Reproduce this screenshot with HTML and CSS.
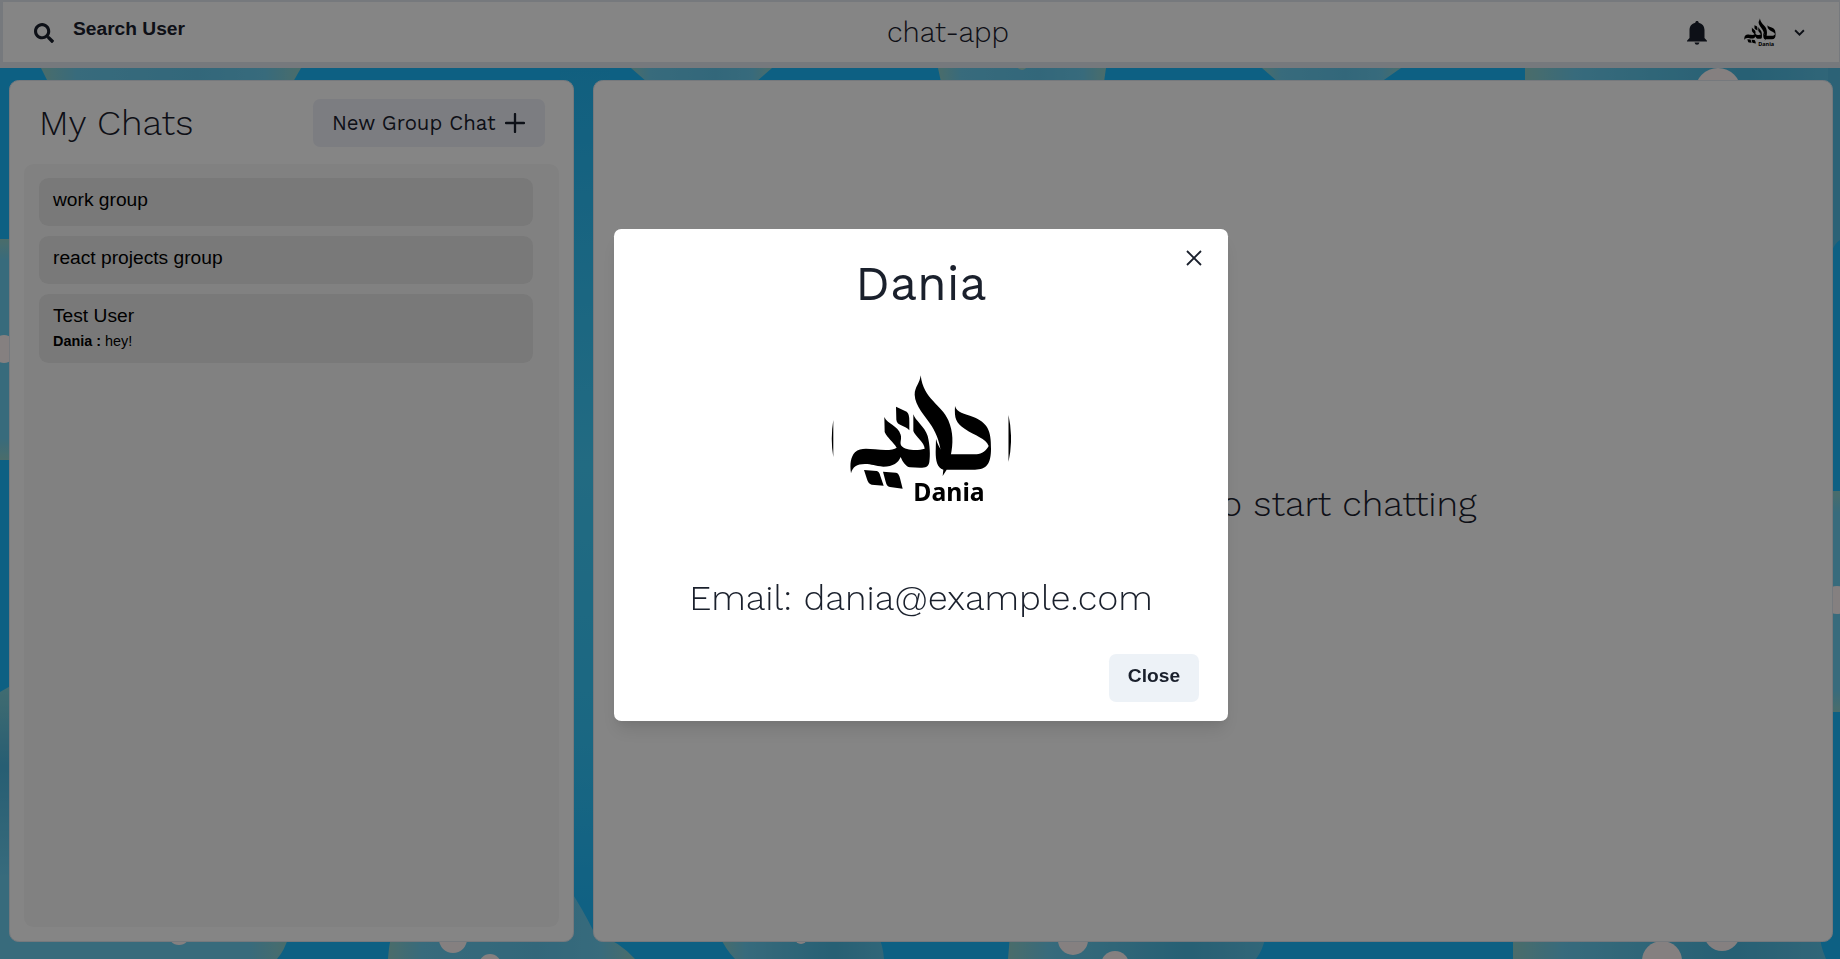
FILE: index.html
```html
<!DOCTYPE html>
<html lang="en">
<head>
<meta charset="utf-8">
<title>chat-app</title>
<link rel="stylesheet" href="styles.css">
</head>
<body>
<svg class="backdrop" viewBox="0 0 1840 959" aria-hidden="true">
  <defs>
    <linearGradient id="bub"><stop offset="0" stop-color="#8fd0cc"/><stop offset=".14" stop-color="#6bcdee"/><stop offset=".6" stop-color="#62c6ea"/><stop offset=".86" stop-color="#6bcdee"/><stop offset="1" stop-color="#8fd0cc"/></linearGradient>
    <linearGradient id="bubDark"><stop offset="0" stop-color="#8fd0cc"/><stop offset=".16" stop-color="#6bcdee"/><stop offset=".7" stop-color="#4bb8de"/><stop offset="1" stop-color="#5fc4e8"/></linearGradient>
    <linearGradient id="corner"><stop offset="0" stop-color="#6bcdee"/><stop offset=".86" stop-color="#6bcdee"/><stop offset="1" stop-color="#8fd0cc"/></linearGradient>
    <linearGradient id="side" x2="0" y2="1"><stop offset="0" stop-color="#8fd0cc"/><stop offset=".1" stop-color="#6bcdee"/><stop offset=".9" stop-color="#6bcdee"/><stop offset="1" stop-color="#8fd0cc"/></linearGradient>
    <linearGradient id="low" x2="0" y2="1"><stop offset="0" stop-color="#7fd0d8"/><stop offset=".3" stop-color="#4bb4dc"/><stop offset=".7" stop-color="#6bcdee"/></linearGradient>
    <linearGradient id="gap" x2="0" y2="1"><stop offset="0" stop-color="#22b7f4"/><stop offset=".45" stop-color="#42cdfa"/><stop offset=".75" stop-color="#34c6fa"/><stop offset="1" stop-color="#1bb8fc"/></linearGradient>
  </defs>
  <rect x="560" y="68" width="50" height="880" fill="url(#gap)"/>
  <g fill="url(#bub)">
    <path d="M41 68L48 82H293L301 68Z"/><path d="M631 68L647 82H756L772 68Z"/>
    <path d="M938 68L941 82H1104L1106 68Z"/><path d="M1262 68L1278 82H1381L1401 68Z"/>
    <path d="M388 959Q389 945 391 938L570 890Q582 908 594 932Q620 942 635 959Z"/>
  </g>
  <path fill="url(#corner)" d="M0 935H289Q285 950 277 959H0Z"/>
  <g fill="url(#bubDark)">
    <path d="M1525 68V90H1840V68Z"/>
    <path d="M719 935Q726 950 735 959H884Q883 945 878 935Z"/>
    <path d="M1010 935L1008 959H1256Q1263 950 1266 935Z"/><path d="M1513 935V959H1826Q1820 945 1820 935Z"/>
  </g>
  <path fill="#55bde2" d="M1828 68V260Q1834 243 1840 240V68Z"/>
  <path fill="url(#side)" d="M0 239H14V460H0Z"/><path fill="url(#side)" d="M1828 491H1840V712H1828Z"/>
  <path fill="url(#low)" d="M0 692L14 684V959H0Z"/>
  <g fill="#fff5f5">
    <ellipse cx="4" cy="349" rx="12" ry="14"/><ellipse cx="1837" cy="600" rx="14" ry="14"/>
    <circle cx="179" cy="934" r="11"/><circle cx="453" cy="939" r="14"/><circle cx="490" cy="965" r="11"/>
    <circle cx="801" cy="938" r="6"/><circle cx="1073" cy="940" r="15"/><circle cx="1115" cy="965" r="14"/>
    <circle cx="1662" cy="961" r="20"/><circle cx="1722" cy="933" r="18"/><circle cx="1718" cy="91" r="23"/>
  </g>
  <circle cx="1022" cy="65" r="5" fill="#a9d8cf"/>
</svg>

<div class="app">
  <header class="topbar">
    <div class="search">
      <svg class="icon-search" viewBox="0 0 512 512"><path d="M505 442.700 405.300 343c-4.500-4.500-10.600-7-17-7H372c27.600-35.300 44-79.700 44-128C416 93.100 322.900 0 208 0S0 93.100 0 208s93.100 208 208 208c48.300 0 92.700-16.400 128-44v16.300c0 6.400 2.500 12.500 7 17l99.700 99.700c9.400 9.400 24.600 9.400 33.900 0l28.300-28.300c9.400-9.400 9.400-24.600.1-34zM208 336c-70.700 0-128-57.200-128-128 0-70.700 57.200-128 128-128 70.700 0 128 57.200 128 128 0 70.700-57.200 128-128 128z"/></svg>
      <span class="search-label">Search User</span>
    </div>
    <h1 class="brand">chat-app</h1>
    <div class="account">
      <svg class="icon-bell" viewBox="0 0 20 24"><path d="M10 0C11 0 11.700.7 11.700 1.700C15.400 2.500 17.500 5.400 17.500 9V17L20 19.700V20.500H0V19.700L2.500 17V9C2.500 5.400 4.600 2.500 8.300 1.700C8.300.7 9 0 10 0ZM7.500 21.500H12.500Q12 23.800 10 23.800T7.500 21.500Z"/></svg>
      <svg class="avatar-small"><use href="#mark"/></svg>
      <svg class="icon-chevron" viewBox="0 0 10 7"><path d="M1 1L5 5L9 1"/></svg>
    </div>
  </header>

  <main class="panels">
    <section class="chats">
      <div class="chats-head">
        <h2 class="chats-title">My Chats</h2>
        <button class="new-group"><span>New Group Chat</span>
          <svg class="icon-plus" viewBox="0 0 20 20"><path d="M10 1V19M1 10H19"/></svg>
        </button>
      </div>
      <div class="chat-list">
        <div class="chat">work group</div>
        <div class="chat">react projects group</div>
        <div class="chat">Test User<p class="preview"><b>Dania :</b> hey!</p></div>
      </div>
    </section>
    <section class="conversation"><p class="empty">Click on a user to start chatting</p></section>
  </main>
</div>

<div class="overlay">
  <div class="modal" role="dialog" aria-label="Dania">
    <button class="modal-x" aria-label="Dismiss"><svg class="icon-x" viewBox="0 0 16 16"><path d="M1 1L15 15M15 1L1 15"/></svg></button>
    <h2 class="modal-title">Dania</h2>
    <svg class="portrait" viewBox="0 0 180 180">
      <symbol id="mark" viewBox="93 -5 540 540">
        <path d="M362 80C360 103 344 115 344 138C345 172 376 202 395 232C411 258 422 288 424 324L452 322C460 285 460 250 445 215C425 168 370 152 362 80Z"/>
        <path d="M465 172C470 192 493 195 520 205C562 222 574 245 573 300C573 345 560 362 525 363H440L428 382L430 363C411 358 407 335 407 310L408 270C415 297 428 313 447 317L530 317C545 316 560 305 566 292C558 268 525 262 495 241C467 222 463 210 465 172Z"/>
        <path d="M340 197C345 215 375 235 383 262C390 290 391 320 388 340C385 355 378 357 360 357L330 356C318 354 308 340 302 325C295 342 280 354 250 354C225 352 215 346 195 346C170 346 158 355 153 374C149 345 152 325 165 311C180 297 200 300 225 302C255 305 280 305 290 297C280 280 262 268 254 250L253 205C262 227 294 230 302 258C306 272 298 281 304 291C315 304 350 308 374 300C374 282 345 262 340 247Z"/>
        <path d="M288 174L320 189Q329 195 328 220V245C318 230 290 232 289 213Z"/>
        <path d="M192 364L230 367Q238 369 241 382L251 411L215 408Q205 406 201 392ZM249 369L288 372Q297 374 300 389L308 420L270 415Q260 413 257 399Z"/>
        <text class="mark-name" x="340" y="456" textLength="214" lengthAdjust="spacingAndGlyphs">Dania</text>
      </symbol>
      <use href="#mark"/>
      <path d="M2.300 73Q-.8 92 2.300 110ZM177.500 68Q182.600 92 177.500 115Z"/>
    </svg>
    <p class="email">Email: dania@example.com</p>
    <div class="modal-foot"><button class="close">Close</button></div>
  </div>
</div>
</body>
</html>
```
FILE: styles.css
```css
* { box-sizing: border-box; margin: 0; padding: 0; }
body {
  height: 959px;
  overflow: hidden;
  background: #19b8fb;
  color: #1a202c;
  font: 19.2px/28.8px "Nimbus Sans", "Liberation Sans", Arial, sans-serif;
}
button { border: 0; background: none; color: inherit; font: inherit; }
svg { display: block; flex: none; }
.backdrop { position: absolute; inset: 0; width: 1840px; height: 959px; z-index: -1; }
.mark-name { font: bold 74px "Noto Sans", sans-serif; }

.app { display: flex; flex-direction: column; height: 959px; }
.topbar {
  display: flex;
  justify-content: space-between;
  align-items: center;
  height: 68px;
  padding: 0 34px 0 31px;
  background: #fff;
  border: solid #e2e8f0;
  border-width: 2px 1px 6px 3px;
}
.search { display: flex; align-items: center; gap: 19px; padding-right: 24px; }
.icon-search { width: 20px; height: 20px; margin-top: 2px; fill: #1a202c; }
.search-label { font-weight: bold; padding-bottom: 5px; }
.brand, .chats-title, .new-group, .empty, .modal-title, .email {
  font-family: "Work Sans", Inter, sans-serif;
  font-weight: 300;
}
.brand { font-size: 28.8px; }
.account { display: flex; align-items: center; justify-content: flex-end; }
.icon-bell { width: 20px; height: 24px; fill: #1a202c; margin-top: 1px; }
.avatar-small { width: 40px; height: 40px; margin: 0 14px 0 33px; }
.icon-chevron { width: 11px; height: 8px; margin-top: 2px; fill: none; stroke: #1a202c; stroke-width: 1.7; }

.panels { flex: 1; display: flex; gap: 19px; padding: 12px 7px 17px 9px; }
.chats, .conversation { background: #fff; border: 1px solid #e2e8f0; border-radius: 9.6px; }
.chats { display: flex; flex-direction: column; width: 565px; padding: 18px 14px 14px; }
.chats-head { display: flex; align-items: center; justify-content: space-between; height: 48px; padding: 0 14px 0 15px; margin-bottom: 17px; }
.chats-title { font-size: 36px; }
.new-group {
  display: flex;
  align-items: center;
  justify-content: space-between;
  width: 232px;
  height: 48px;
  padding: 0 20px 0 19px;
  border-radius: 7.2px;
  background: #edf0f8;
  font-size: 20.4px;
  font-weight: 400;
}
.icon-plus { width: 20px; height: 20px; fill: none; stroke: #1a202c; stroke-width: 2.3; stroke-linecap: round; }
.chat-list { flex: 1; display: flex; flex-direction: column; gap: 10px; padding: 14px 26px 14px 15px; border-radius: 9.6px; background: #f8f8f8; }
.chat { padding: 8px 14px 11px; min-height: 48px; border-radius: 9.6px; background: #e8e8e8; color: #000; }
.preview { font-size: 14.4px; line-height: 21.6px; }
.conversation { flex: 1; display: flex; align-items: center; justify-content: center; }
.empty { font-size: 36px; white-space: nowrap; padding-bottom: 13px; }

.overlay { position: fixed; inset: 0; display: flex; align-items: flex-start; justify-content: center; padding: 229px 0 0 2px; background: rgba(0, 0, 0, .48); }
.modal {
  position: relative;
  display: flex;
  flex-direction: column;
  align-items: center;
  width: 614px;
  height: 492px;
  border-radius: 7.2px;
  background: #fff;
  box-shadow: 0 12px 18px -3.6px rgba(0, 0, 0, .1), 0 5px 7px -2.4px rgba(0, 0, 0, .05);
}
.modal-x { position: absolute; top: 10px; right: 15px; display: flex; align-items: center; justify-content: center; width: 38px; height: 38px; }
.icon-x { width: 16px; height: 16px; fill: none; stroke: #1a202c; stroke-width: 1.8; }
.modal-title { margin-top: 19px; font-size: 48px; line-height: 72px; font-weight: 400; }
.portrait { width: 180px; height: 180px; margin-top: 27px; }
.email { margin-top: 44px; font-size: 36px; line-height: 54px; }
.modal-foot { display: flex; justify-content: flex-end; width: 100%; margin-top: 29px; padding-right: 29px; }
.close { width: 90px; height: 48px; padding-bottom: 4px; border-radius: 7.2px; background: #edf2f7; font-weight: bold; }
```
